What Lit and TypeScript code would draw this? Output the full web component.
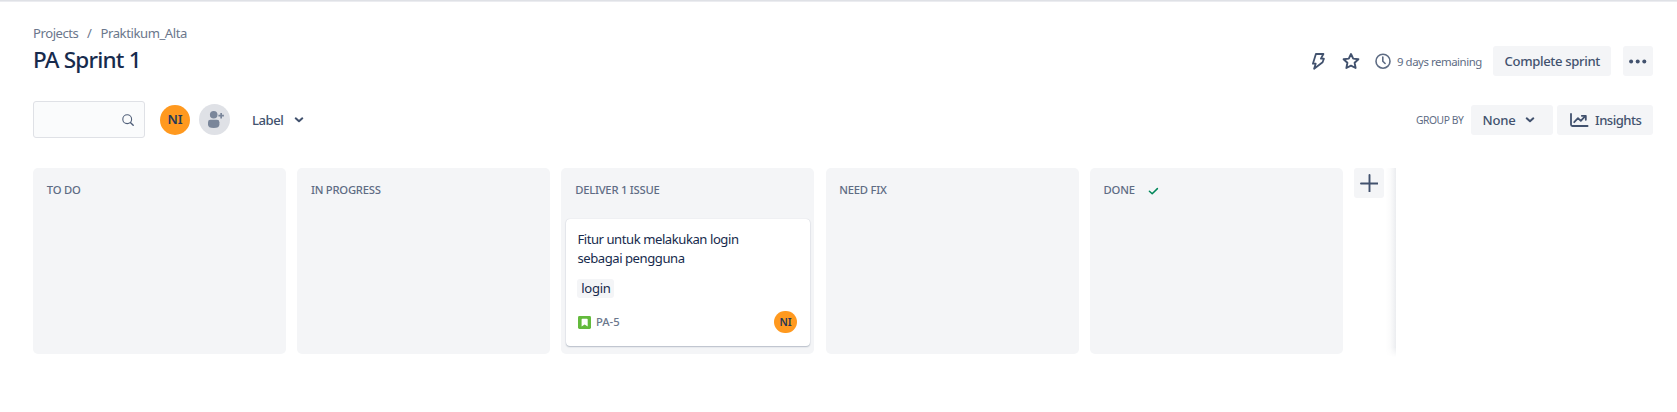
import { LitElement, html, css, svg, nothing } from "lit";
import { customElement, property } from "lit/decorators.js";

interface Issue {
  summary: string[];
  label: string;
  key: string;
}
interface Column {
  name: string;
  tracking: string;
  done?: boolean;
  issues: Issue[];
}

const COLUMNS: Column[] = [
  { name: "TO DO", tracking: "t0", issues: [] },
  { name: "IN PROGRESS", tracking: "t1", issues: [] },
  {
    name: "DELIVER 1 ISSUE",
    tracking: "t2",
    issues: [{ summary: ["Fitur untuk melakukan login", "sebagai pengguna"], label: "login", key: "PA-5" }],
  },
  { name: "NEED FIX", tracking: "t3", issues: [] },
  { name: "DONE", tracking: "t4", done: true, issues: [] },
];

const chevron = svg`<path d="M1.7 2.3 5 5.3 8.3 2.3" fill="none" stroke="#42526e" stroke-width="2" stroke-linecap="round" stroke-linejoin="round"/>`;

@customElement("board-column")
class BoardColumn extends LitElement {
  @property({ attribute: false }) column!: Column;

  static styles = css`
    :host { display: block; box-sizing: border-box; background: #f4f5f7; border-radius: 5px; padding: 0 4px; }
    .head { display: flex; align-items: center; height: 51px; padding: 0 0 0 9.8px; box-sizing: border-box; }
    .name { font-size: 11.25px; font-weight: 500; line-height: 16px; color: #5e6c84; white-space: nowrap; padding-bottom: 8px; }
    .t0 { letter-spacing: -0.2px; }
    .t1 { letter-spacing: -0.25px; }
    .t2 { letter-spacing: -0.24px; }
    .t3 { letter-spacing: -0.25px; }
    .t4 { letter-spacing: -0.15px; }
    .check { margin: 0 0 5px 13px; display: block; }
    .card { height: 127px; margin-left: 1px; width: 244px; box-sizing: border-box; background: #fff; border-radius: 4px; box-shadow: 0 1px 1.5px rgba(9, 30, 66, 0.25), 0 0 1px rgba(9, 30, 66, 0.18); padding: 11px 13.5px 0 11px; }
    .summary { font-size: 13.1px; line-height: 19px; color: #172b4d; letter-spacing: -0.45px; white-space: nowrap; }
    .tag { display: flex; align-items: center; justify-content: center; width: 37px; height: 19px; margin-top: 11px; background: #f4f5f7; border-radius: 3px; color: #172b4d; font-size: 13.1px; letter-spacing: -0.3px; line-height: 19px; }
    .foot { display: flex; align-items: center; margin-top: 13px; height: 22px; }
    .foot svg { display: block; margin-left: 1px; }
    .key { font-size: 11.25px; font-weight: 500; line-height: 16px; color: #6b778c; margin-left: 4.5px; }
    .avatar { margin-left: auto; width: 22.5px; height: 22.5px; border-radius: 50%; background: #ff991f; color: #253858; font-weight: 600; font-size: 10.5px; display: grid; place-items: center; line-height: 1; }
  `;

  render() {
    const c = this.column;
    return html`
      <div class="head">
        <span class="name ${c.tracking}">${c.name}</span>
        ${c.done
          ? html`<svg class="check" width="11" height="8" viewBox="0 0 11 8"><path d="M1.4 4.2 4.2 6.8 9.4 1.6" fill="none" stroke="#00875a" stroke-width="1.5" stroke-linecap="round" stroke-linejoin="round"/></svg>`
          : nothing}
      </div>
      ${c.issues.map(
        (i) => html`<div class="card">
          ${i.summary.map((l) => html`<div class="summary">${l}</div>`)}
          <div class="tag">${i.label}</div>
          <div class="foot">
            <svg width="13" height="13" viewBox="0 0 13 13"><rect width="13" height="13" rx="1.4" fill="#63ba3c"/><path d="M3.6 3.5Q3.6 2.7 4.4 2.7H8.9Q9.7 2.7 9.7 3.5V10.6L6.65 8.4 3.6 10.6Z" fill="#fff"/></svg>
            <span class="key">${i.key}</span>
            <span class="avatar">NI</span>
          </div>
        </div>`
      )}
    `;
  }
}

@customElement("app-root")
class AppRoot extends LitElement {
  static styles = css`
    :host { display: block; box-sizing: border-box; height: 412px; overflow: hidden; background: #fff; font-family: "Noto Sans", "Open Sans", sans-serif; color: #42526e; border-top: 1px solid #dfe1e6; }
    .rule { height: 1px; background: #ebecf0; }
    .page { padding: 20px 24px 0 33px; }
    .top { display: flex; justify-content: space-between; height: 79px; }
    .crumbs { display: flex; font-size: 13.1px; line-height: 22px; color: #6b778c; }
    .c1 { letter-spacing: -0.45px; width: 54px; }
    .c2 { width: 13.5px; }
    .c3 { letter-spacing: -0.43px; }
    h1 { margin: 0; font-size: 22.5px; line-height: 31px; font-weight: 500; color: #172b4d; letter-spacing: -0.8px; }
    .actions { display: flex; align-items: center; height: 30px; margin-top: 24px; }
    .actions svg, .filters svg { display: block; flex: none; }
    .bolt { margin-right: 16px; }
    .star { margin-right: 14px; }
    .days { width: 85px; margin: 0 11px 0 5px; font-size: 11.4px; color: #5e6c84; white-space: nowrap; letter-spacing: -0.45px; }
    .btn { display: flex; align-items: center; box-sizing: border-box; height: 30px; background: #f4f5f7; border-radius: 3px; font-size: 13.1px; font-weight: 500; white-space: nowrap; color: #42526e; }
    .complete { width: 118px; padding-left: 11.5px; margin-right: 12px; letter-spacing: -0.34px; }
    .more { width: 30px; justify-content: center; }
    .filters { display: flex; align-items: center; height: 37px; }
    .search { box-sizing: border-box; width: 112px; height: 37px; border: 1px solid #dfe1e6; border-radius: 3px; background: #fafbfc; display: flex; align-items: center; justify-content: flex-end; padding-right: 10px; margin-right: 15px; }
    .avatar { width: 30px; height: 30px; border-radius: 50%; background: #ff991f; color: #253858; font-weight: 600; font-size: 13px; line-height: 1; display: grid; place-items: center; margin-right: 9px; }
    .label { font-size: 13.1px; font-weight: 500; width: 41.5px; margin-left: 22px; letter-spacing: -0.45px; }
    .group { margin-left: auto; width: 55px; font-size: 10.3px; color: #5e6c84; white-space: nowrap; letter-spacing: -0.45px; }
    .none { width: 82px; padding-left: 11.5px; margin-right: 4px; }
    .none span { width: 42.5px; letter-spacing: -0.2px; }
    .insights { width: 96px; padding-left: 12px; }
    .insights span { margin-left: 6px; letter-spacing: -0.5px; }
    .board { display: flex; width: 1363px; height: 186px; margin-top: 30px; }
    .cols { display: grid; grid-template-columns: repeat(5, 253px); column-gap: 11.2px; margin-right: 11.2px; }
    .plus { width: 30px; justify-content: center; }
    .fade { width: 10px; height: 189px; margin-left: auto; background: linear-gradient(to right, rgba(9, 30, 66, 0), rgba(9, 30, 66, 0.02) 45%, rgba(9, 30, 66, 0.08)); mask-image: linear-gradient(#000 95%, transparent); }
  `;

  render() {
    return html`
      <div class="rule"></div>
      <div class="page">
        <div class="top">
          <div>
            <div class="crumbs"><span class="c1">Projects</span><span class="c2">/</span><span class="c3">Praktikum_Alta</span></div>
            <h1>PA Sprint 1</h1>
          </div>
          <div class="actions">
            <svg class="bolt" width="15" height="18" viewBox="0 0 15 18"><path d="M4.9 2H12.4L9.9 6.7H12.9L11.6 10.3 3.1 16.7 4.7 11.7H1.9Z" fill="none" stroke="#42526e" stroke-width="1.8" stroke-linejoin="round"/></svg>
            <svg class="star" width="18" height="18" viewBox="0 0 18 18"><path d="M9 2 11.2 6.6 16.4 7.2 12.6 10.8 13.6 16 9 13.7 4.4 16 5.4 10.8 1.6 7.2 6.8 6.6Z" fill="none" stroke="#42526e" stroke-width="1.9" stroke-linejoin="round"/></svg>
            <svg width="18" height="18" viewBox="0 0 18 18"><circle cx="9" cy="9.2" r="7" fill="none" stroke="#5e6c84" stroke-width="1.6"/><path d="M8.8 5V9.2l2.3 2.3" fill="none" stroke="#5e6c84" stroke-width="1.6" stroke-linecap="round"/></svg>
            <span class="days">9 days remaining</span>
            <div class="btn complete">Complete sprint</div>
            <div class="btn more"><svg width="20" height="6" viewBox="0 0 20 6"><g fill="#42526e"><circle cx="3.1" cy="3.5" r="2"/><circle cx="9.7" cy="3.5" r="2"/><circle cx="16.3" cy="3.5" r="2"/></g></svg></div>
          </div>
        </div>
        <div class="filters">
          <div class="search"><svg width="12" height="12" viewBox="0 0 12 12"><circle cx="5.2" cy="5.2" r="4.4" fill="none" stroke="#505f79" stroke-width="1.1"/><path d="M8.4 8.4 11.2 11.2" stroke="#505f79" stroke-width="1.4" stroke-linecap="round"/></svg></div>
          <div class="avatar">NI</div>
          <svg width="31" height="31" viewBox="0 0 31 31"><circle cx="15.5" cy="15.5" r="15.5" fill="#dfe1e6"/><g fill="#7a869a"><circle cx="14.7" cy="10.8" r="3.8"/><path d="M9 18.2Q9 15.8 11.4 15.8H18Q20.4 15.8 20.4 18.2V20.5Q20.4 24 14.7 24T9 20.5Z"/><path d="M21.3 9h1.7v1.8h1.9v1.7H23v1.9h-1.7v-1.9h-1.9v-1.7h1.9Z"/></g></svg>
          <span class="label">Label</span>
          <svg width="10" height="7" viewBox="0 0 10 7">${chevron}</svg>
          <span class="group">GROUP BY</span>
          <div class="btn none"><span>None</span><svg width="10" height="7" viewBox="0 0 10 7">${chevron}</svg></div>
          <div class="btn insights"><svg width="20" height="16" viewBox="0 0 20 16"><g fill="none" stroke="#42526e" stroke-width="1.8" stroke-linecap="round" stroke-linejoin="round"><path d="M2 2V12.6Q2 14 3.4 14H18.6"/><path d="M5.2 10.2 9 6.2 11.8 8.8 16.2 4.2"/><path d="M12.8 3.8H16.8V7.8"/></g></svg><span>Insights</span></div>
        </div>
        <div class="board">
          <div class="cols">${COLUMNS.map((c) => html`<board-column .column=${c}></board-column>`)}</div>
          <div class="btn plus"><svg width="18" height="18" viewBox="0 0 18 18"><path d="M9.5 1V17.6M1 9.5H17.6" stroke="#42526e" stroke-width="1.9" stroke-linecap="round"/></svg></div>
          <div class="fade"></div>
        </div>
      </div>
    `;
  }
}
